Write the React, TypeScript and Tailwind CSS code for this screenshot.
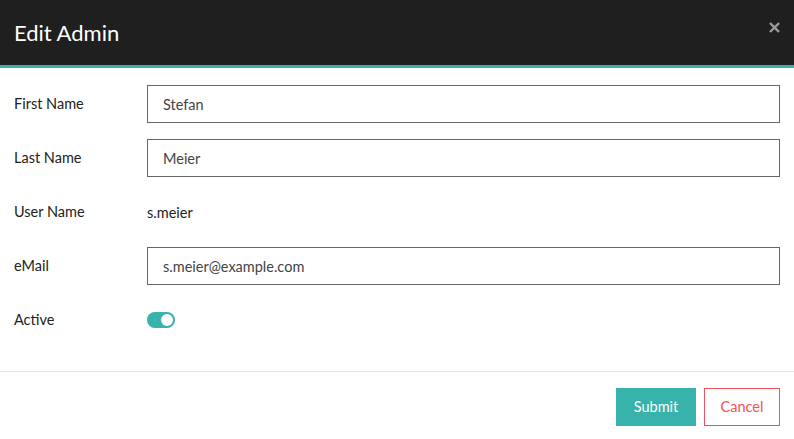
import React, { useState } from 'react';

const font = { fontFamily: '"Segoe UI", Lato, "Open Sans", sans-serif' };

const Field: React.FC<{ label: string; children: React.ReactNode }> = ({ label, children }) => (
    <div className="flex items-center h-[38px]">
        <label className="w-[133px] shrink-0 text-[14.5px] text-[#222]">{label}</label>
        <div className="flex-1">{children}</div>
    </div>
);

const TextInput: React.FC<{ value: string; onChange: (v: string) => void }> = ({ value, onChange }) => (
    <input
        type="text"
        value={value}
        onChange={(e) => onChange(e.target.value)}
        className="w-full h-[38px] border border-[#666] px-[15px] text-[14.5px] text-[#444] outline-none focus:border-[#37b3ab]"
    />
);

export default function App() {
    const [firstName, setFirstName] = useState('Stefan');
    const [lastName, setLastName] = useState('Meier');
    const [email, setEmail] = useState('s.meier@example.com');
    const [active, setActive] = useState(true);

    return (
        <div className="w-[794px] h-[439px] bg-white flex flex-col" style={font}>
            {/* Header */}
            <div className="h-[68px] shrink-0 bg-[#1f1f1f] border-b-[3px] border-[#37b3ab] flex items-center justify-between pl-[14px] pr-[14px]">
                <h1 className="text-[22px] text-white leading-none">Edit Admin</h1>
                <button className="text-[#9a9a9a] -mt-[10px]">
                    <svg className="w-[11px] h-[11px]" viewBox="0 0 12 12" fill="none" stroke="currentColor" strokeWidth="2.6" strokeLinecap="square">
                        <path d="M2 2l8 8M10 2l-8 8" />
                    </svg>
                </button>
            </div>

            {/* Body */}
            <div className="flex-1 flex flex-col gap-[16px] pl-[14px] pr-[14px] pt-[17px]">
                <Field label="First Name">
                    <TextInput value={firstName} onChange={setFirstName} />
                </Field>
                <Field label="Last Name">
                    <TextInput value={lastName} onChange={setLastName} />
                </Field>
                <Field label="User Name">
                    <span className="text-[14.5px] text-[#222]">s.meier</span>
                </Field>
                <Field label="eMail">
                    <TextInput value={email} onChange={setEmail} />
                </Field>
                <Field label="Active">
                    <button
                        onClick={() => setActive(!active)}
                        className={`w-[28px] h-[16px] rounded-full flex items-center px-[2px] ${active ? 'bg-[#37b3ab] justify-end' : 'bg-[#ccc] justify-start'}`}
                    >
                        <span className="w-[12px] h-[12px] rounded-full bg-white" />
                    </button>
                </Field>
            </div>

            {/* Footer */}
            <div className="h-[68px] shrink-0 border-t border-[#e5e5e5] flex items-center justify-end gap-[8px] pr-[14px] pt-[2px]">
                <button className="w-[80px] h-[38px] bg-[#37b3ab] text-white text-[14.5px]">Submit</button>
                <button className="w-[76px] h-[38px] border border-[#f0505a] text-[#f0505a] text-[14.5px] bg-white">Cancel</button>
            </div>
        </div>
    );
}
